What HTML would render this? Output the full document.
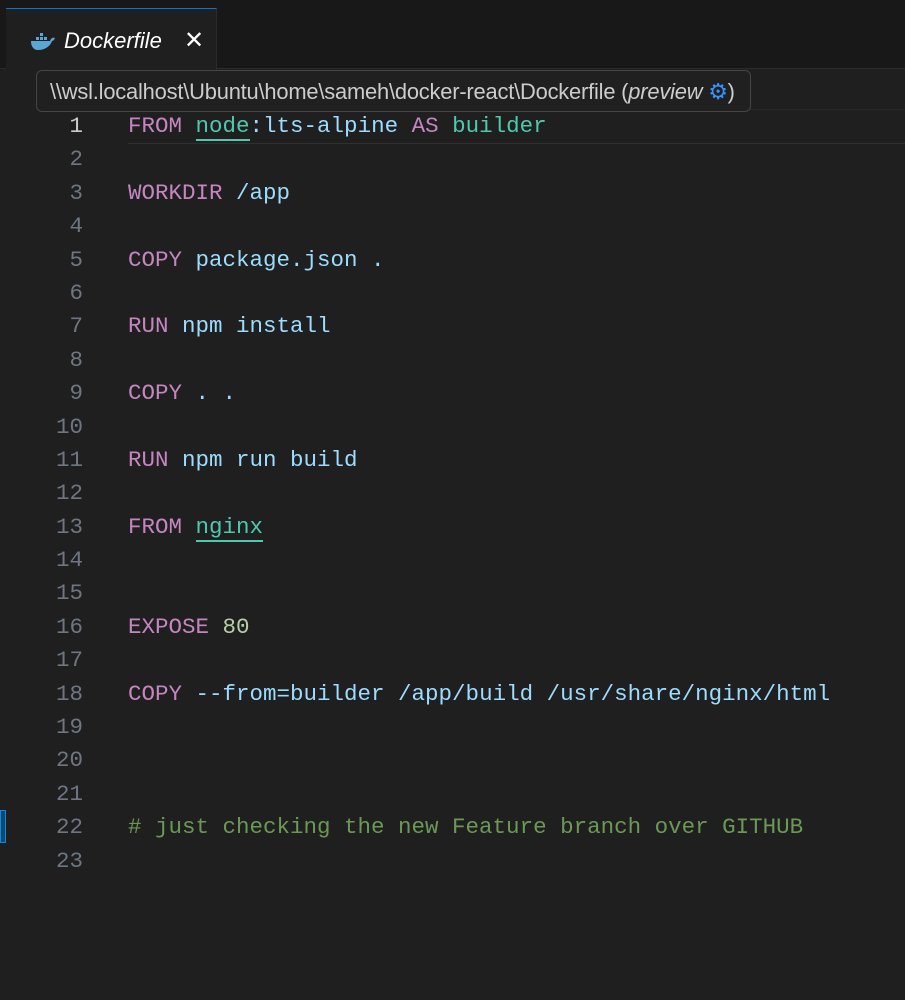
<!DOCTYPE html>
<html><head><style>
body{margin:0;width:905px;height:1000px;background:#1f1f1f;overflow:hidden;position:relative;font-family:"Liberation Sans",sans-serif}
.top{position:absolute;left:0;top:0;width:905px;height:68px;background:#181818;border-bottom:1px solid #2b2b2b}
.tab{position:absolute;left:6px;top:8px;width:210px;height:61px;background:#1f1f1f;border-top:1px solid #0078d4;border-right:1px solid #2b2b2b}
.tab .t{position:absolute;left:58px;top:19px;font-style:italic;color:#fff;font-size:22px}
.tab .x{position:absolute;top:17px;color:#fff;font-size:24px}
.tip{position:absolute;left:36px;top:70px;width:715px;height:42px;background:#202020;border:1px solid #454545;border-radius:6px;color:#ccc;font-size:21.9px;line-height:41px;padding-left:13px;box-sizing:border-box;white-space:nowrap;z-index:2;letter-spacing:-0.2px}
.code{position:absolute;left:0;top:110px;font-family:"Liberation Mono",monospace;font-size:22.5px}
.l{height:33.4px;line-height:33.4px;position:relative;white-space:pre}
.n{position:absolute;left:0;width:83px;text-align:right;color:#6e7681}
.c{position:absolute;left:128px;color:#9cdcfe}
.k{color:#c586c0}.g{color:#4ec9b0}.m{color:#6a9955}.num{color:#b5cea8}
.u{border-bottom:2px solid #4ec9b0}
.cur{position:absolute;left:128px;top:109px;width:777px;height:33px;border-top:1px solid #282828;border-bottom:1px solid #303030}
.bar{position:absolute;left:0;top:810px;width:6px;height:33px;background:#0b4a73;border:1px solid #1a85d6;box-sizing:border-box}
</style></head><body>
<div class="top"></div>
<div class="tab"><svg style="position:absolute;left:24px;top:24px" width="26" height="18" viewBox="0 0 26 18"><path d="M1 8h19c1-3 3-4 5-3-1 2-2 3-3 3-2 6-8 9-14 9-4 0-7-3-7-9z" fill="#5aa7d6"/><rect x="6" y="4" width="3" height="3" fill="#5aa7d6"/><rect x="10" y="4" width="3" height="3" fill="#5aa7d6"/><rect x="10" y="0" width="3" height="3" fill="#5aa7d6"/><rect x="14" y="4" width="3" height="3" fill="#5aa7d6"/></svg><span class="t">Dockerfile</span><span class="x" style="left:178px">✕</span></div>
<div class="tip">\\wsl.localhost\Ubuntu\home\sameh\docker-react\Dockerfile (<i>preview</i> <span style="color:#3794ff">⚙</span>)</div>
<div class="cur"></div>
<div class="bar"></div>
<div class="code">
<div class="l"><span class="n" style="color:#ccc">1</span><span class="c"><span class="k">FROM</span> <span class="g u">node</span>:lts-alpine <span class="k">AS</span> <span class="g">builder</span></span></div>
<div class="l"><span class="n">2</span></div>
<div class="l"><span class="n">3</span><span class="c"><span class="k">WORKDIR</span> /app</span></div>
<div class="l"><span class="n">4</span></div>
<div class="l"><span class="n">5</span><span class="c"><span class="k">COPY</span> package.json .</span></div>
<div class="l"><span class="n">6</span></div>
<div class="l"><span class="n">7</span><span class="c"><span class="k">RUN</span> npm install</span></div>
<div class="l"><span class="n">8</span></div>
<div class="l"><span class="n">9</span><span class="c"><span class="k">COPY</span> . .</span></div>
<div class="l"><span class="n">10</span></div>
<div class="l"><span class="n">11</span><span class="c"><span class="k">RUN</span> npm run build</span></div>
<div class="l"><span class="n">12</span></div>
<div class="l"><span class="n">13</span><span class="c"><span class="k">FROM</span> <span class="g u">nginx</span></span></div>
<div class="l"><span class="n">14</span></div>
<div class="l"><span class="n">15</span></div>
<div class="l"><span class="n">16</span><span class="c"><span class="k">EXPOSE</span> <span class="num">80</span></span></div>
<div class="l"><span class="n">17</span></div>
<div class="l"><span class="n">18</span><span class="c"><span class="k">COPY</span> --from=builder /app/build /usr/share/nginx/html</span></div>
<div class="l"><span class="n">19</span></div>
<div class="l"><span class="n">20</span></div>
<div class="l"><span class="n">21</span></div>
<div class="l"><span class="n">22</span><span class="c m"># just checking the new Feature branch over GITHUB</span></div>
<div class="l"><span class="n">23</span></div>
</div>
</body></html>
